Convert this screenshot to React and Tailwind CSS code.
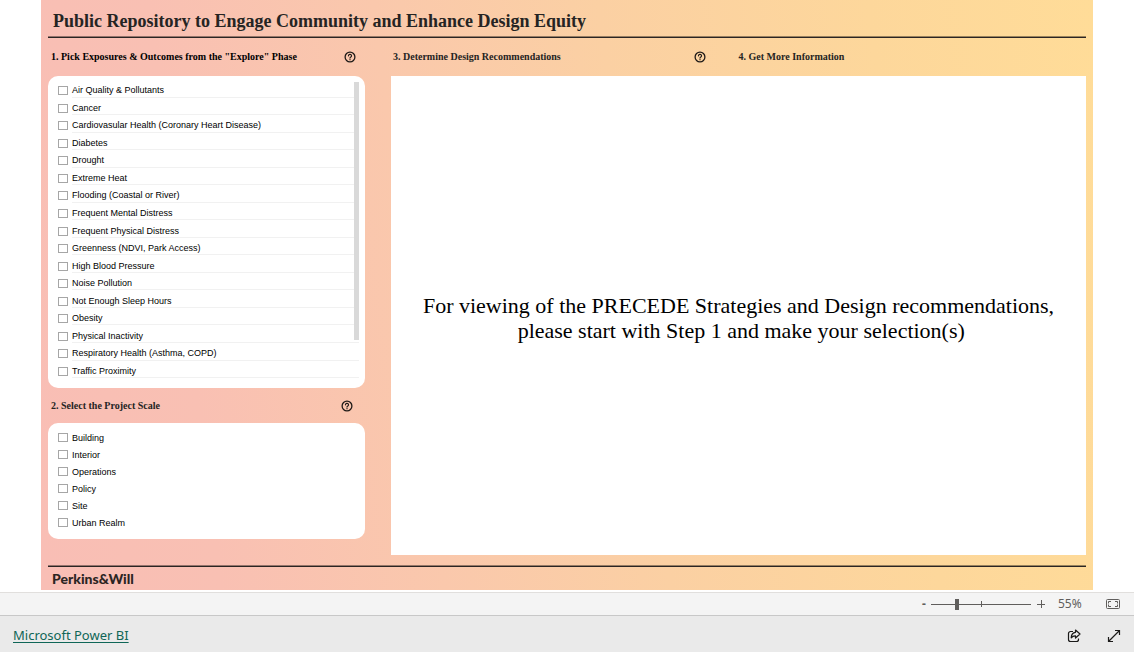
import React, { useState } from 'react';

const exposures = [
  'Air Quality & Pollutants',
  'Cancer',
  'Cardiovasular Health (Coronary Heart Disease)',
  'Diabetes',
  'Drought',
  'Extreme Heat',
  'Flooding (Coastal or River)',
  'Frequent Mental Distress',
  'Frequent Physical Distress',
  'Greenness (NDVI, Park Access)',
  'High Blood Pressure',
  'Noise Pollution',
  'Not Enough Sleep Hours',
  'Obesity',
  'Physical Inactivity',
  'Respiratory Health (Asthma, COPD)',
  'Traffic Proximity',
];

const scales = ['Building', 'Interior', 'Operations', 'Policy', 'Site', 'Urban Realm'];

const HelpButton = ({ label }) => (
  <button type="button" aria-label={label} className="flex shrink-0">
    <svg viewBox="0 0 12 12" className="w-3 h-3" fill="none" stroke="#1f1a17" strokeLinecap="round">
      <circle cx="6" cy="6" r="4.9" strokeWidth="1.3" />
      <path d="M4.5 4.8a1.5 1.5 0 1 1 2.3 1.3c-.5.3-.8.5-.8 1" strokeWidth="1.2" />
      <path d="M6 8.6v.1" strokeWidth="1.3" />
    </svg>
  </button>
);

const Rule = () => <div className="h-[2px] border-t border-t-black/40 bg-[#2b2523] bg-clip-padding" />;

const CheckRow = ({ label, checked, onToggle, lined }) => (
  <label className="flex flex-1 items-stretch gap-1">
    <span className="flex items-center pt-1">
      <input
        type="checkbox"
        checked={checked}
        onChange={onToggle}
        className="w-[10px] h-[9px] appearance-none border border-[#a6a6a6] bg-white checked:bg-[#605e5c]"
      />
    </span>
    <span className={lined ? 'flex flex-1 items-center pt-1 border-b border-[#f1f1f1]' : 'flex flex-1 items-center pt-1'}>
      {label}
    </span>
  </label>
);

const App = () => {
  const [picked, setPicked] = useState([]);
  const [zoom, setZoom] = useState(55);

  const toggle = (name) =>
    setPicked(picked.includes(name) ? picked.filter((p) => p !== name) : [...picked, name]);

  return (
    <div className="bg-white font-['Liberation_Sans',Arial,sans-serif] text-black">
      {/* Report canvas */}
      <main className="mx-[41px] px-[7px] bg-[linear-gradient(83deg,#f9beb5_0%,#f9c0b3_16%,#fac8ac_36%,#fbd0a3_56%,#fdd79b_80%,#ffdc98_100%)] font-['Liberation_Serif','Times_New_Roman',serif]">
        <h1 className="h-9 pl-[5px] pt-2 text-[18px] leading-[26px] font-bold text-[#252423]">
          Public Repository to Engage Community and Enhance Design Equity
        </h1>
        <Rule />

        <div className="flex gap-[26px]">
          <div className="w-[317px] shrink-0">
            <div className="flex h-[38px] items-center justify-between pb-px pl-[3px] pr-[9px]">
              <h2 className="text-[10px] font-bold">1. Pick Exposures &amp; Outcomes from the "Explore" Phase</h2>
              <HelpButton label="Help with exposures and outcomes" />
            </div>
            <div className="flex h-[312px] rounded-[10px] bg-white pt-1 pb-[10px] pl-[10px] pr-[6px] font-['Liberation_Sans',Arial,sans-serif] text-[9px] leading-3">
              <div className="flex flex-1 flex-col">
                {exposures.map((name) => (
                  <CheckRow key={name} label={name} checked={picked.includes(name)} onToggle={() => toggle(name)} lined />
                ))}
              </div>
              <div className="-ml-[5px] mt-[2px] h-[258px] w-[5px] bg-[#d9d9d9]" />
            </div>

            <div className="flex h-[35px] items-center justify-between pl-[3px] pr-3">
              <h2 className="text-[10px] font-bold text-[#252423]">2. Select the Project Scale</h2>
              <HelpButton label="Help with project scale" />
            </div>
            <div className="flex h-[116px] flex-col rounded-[10px] bg-white pt-1 pb-[10px] px-[10px] font-['Liberation_Sans',Arial,sans-serif] text-[9px] leading-3">
              {scales.map((name) => (
                <CheckRow key={name} label={name} checked={picked.includes(name)} onToggle={() => toggle(name)} />
              ))}
            </div>
          </div>

          <div className="flex flex-1 flex-col">
            <div className="grid h-[38px] grid-cols-2 items-center pb-px text-[10px] font-bold text-[#252423]">
              <div className="flex items-center justify-between pl-[2px] pr-[33px]">
                <h2>3. Determine Design Recommendations</h2>
                <HelpButton label="Help with design recommendations" />
              </div>
              <h2>4. Get More Information</h2>
            </div>
            <div className="flex h-[479px] items-center justify-center bg-white pt-1 text-center text-[22px] leading-[25px]">
              <p>
                For viewing of the PRECEDE Strategies and Design recommendations,
                <br />
                &nbsp;please start with Step 1 and make your selection(s)
              </p>
            </div>
          </div>
        </div>

        <div className="pt-[10px]">
          <Rule />
          <div className="h-[23px] pl-1 pt-[3px] font-['Lato',sans-serif] text-[14px] leading-[18px] font-black text-[#2b2523]">Perkins&amp;Will</div>
        </div>
      </main>

      {/* Zoom bar */}
      <div className="mt-[2px] flex h-6 items-center justify-end border-y border-t-[#e1dfdd] border-b-[#c8c8c8] bg-[#f4f4f4] pr-[13px] font-['Noto_Sans',sans-serif] text-[12px] text-[#605e5c]">
        <button type="button" aria-label="Zoom out" className="w-[14px] text-center font-bold">-</button>
        <div className="relative flex h-3 w-[100px] items-center">
          <span className="absolute left-[50px] top-[3px] h-[6px] w-px bg-[#605e5c]" />
          <input
            type="range"
            aria-label="Zoom"
            min="0"
            max="220"
            value={zoom}
            onChange={(e) => setZoom(Number(e.target.value))}
            className="relative h-3 w-full appearance-none bg-transparent [&::-webkit-slider-runnable-track]:h-px [&::-webkit-slider-runnable-track]:bg-[#605e5c] [&::-webkit-slider-thumb]:-mt-[5px] [&::-webkit-slider-thumb]:h-[11px] [&::-webkit-slider-thumb]:w-1 [&::-webkit-slider-thumb]:appearance-none [&::-webkit-slider-thumb]:bg-[#605e5c]"
          />
        </div>
        <button type="button" aria-label="Zoom in" className="flex w-5 justify-center">
          <svg viewBox="0 0 8 8" className="w-2 h-2" stroke="#605e5c"><path d="M0 4.5h8M4.5 0v8" /></svg>
        </button>
        <span className="ml-[7px] w-12">{zoom}%</span>
        <button type="button" aria-label="Fit to page">
          <svg viewBox="0 0 15 11" className="w-[15px] h-[11px]" fill="none" stroke="#605e5c">
            <rect x="0.5" y="0.5" width="13" height="9" rx="1" />
            <path d="M2.5 4.5v-2H5M9 2.5h2.5v2M2.5 5.5v2H5M9 7.5h2.5v-2" />
          </svg>
        </button>
      </div>

      {/* Embed footer */}
      <footer className="flex h-9 items-center justify-between bg-[#eaeaea] px-[13px] pt-1">
        <a href="#" className="font-['Noto_Sans',sans-serif] text-[13px] text-[#0f6657] underline underline-offset-2">Microsoft Power BI</a>
        <div className="flex items-center gap-[26px]">
          <button type="button" aria-label="Share">
            <svg viewBox="0 0 14 14" className="w-[14px] h-[14px]" fill="none" stroke="#1b1a19" strokeWidth="1.2" strokeLinejoin="round">
              <path d="M6 2.5H3.5a2 2 0 0 0-2 2v6a2 2 0 0 0 2 2h6a2 2 0 0 0 2-2V9.5" />
              <path d="M8.500 1l4.500 4-4.500 4V6.800C6.500 6.700 5.300 7.300 4.200 8.800 4.300 5.500 6 3.500 8.500 3.300z" />
            </svg>
          </button>
          <button type="button" aria-label="Open in full screen">
            <svg viewBox="0 0 14 14" className="w-[14px] h-[14px]" fill="none" stroke="#1b1a19" strokeWidth="1.2">
              <path d="M1.5 12.5l11-11M8 1.5h4.500V6M1.5 8v4.500H6" />
            </svg>
          </button>
        </div>
      </footer>
    </div>
  );
};

export default App;
